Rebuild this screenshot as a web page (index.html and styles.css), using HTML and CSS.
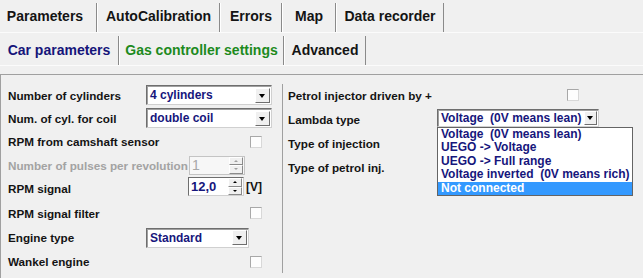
FILE: index.html
```html
<!DOCTYPE html>
<html lang="en">
<head>
    <meta charset="UTF-8">
    <title>Parameters</title>
    <link rel="stylesheet" href="styles.css">
</head>
<body>
    <div class="tabs">
        <div class="tab tab-first w-params">Parameters</div>
        <div class="tab w-auto">AutoCalibration</div>
        <div class="tab w-errors">Errors</div>
        <div class="tab w-map">Map</div>
        <div class="tab w-rec">Data recorder</div>
    </div>

    <div class="tabs subtabs">
        <div class="tab tab-first w-car car">Car parameters</div>
        <div class="tab w-gas gas">Gas controller settings</div>
        <div class="tab w-adv">Advanced</div>
    </div>

    <div class="panel">
        <div class="col col-left">
            <div class="row h23">
                <span class="label fixed">Number of cylinders</span>
                <div class="select w-wide"><span class="value">4 cylinders</span><span class="drop"></span></div>
            </div>
            <div class="row h23">
                <span class="label fixed">Num. of cyl. for coil</span>
                <div class="select w-wide"><span class="value">double coil</span><span class="drop"></span></div>
            </div>
            <div class="row h24">
                <span class="label">RPM from camshaft sensor</span>
                <span class="check"></span>
            </div>
            <div class="row h23">
                <span class="label disabled">Number of pulses per revolution</span>
                <div class="spin spin-disabled">
                    <span class="spin-value">1</span>
                    <span class="spin-btns"><span class="up"></span><span class="down"></span></span>
                </div>
            </div>
            <div class="row h25">
                <span class="label">RPM signal</span>
                <div class="spin spin-unit">
                    <span class="spin-value">12,0</span>
                    <span class="spin-btns"><span class="up"></span><span class="down"></span></span>
                </div>
                <span class="unit">[V]</span>
            </div>
            <div class="row h24">
                <span class="label">RPM signal filter</span>
                <span class="check"></span>
            </div>
            <div class="row h25">
                <span class="label fixed">Engine type</span>
                <div class="select w-engine"><span class="value">Standard</span><span class="drop"></span></div>
            </div>
            <div class="row h23">
                <span class="label">Wankel engine</span>
                <span class="check"></span>
            </div>
        </div>

        <div class="col col-right">
            <div class="row h23">
                <span class="label fixed-r">Petrol injector driven by +</span>
                <span class="check check-r"></span>
            </div>
            <div class="row h24">
                <span class="label fixed-r">Lambda type</span>
                <div class="select w-lambda">
                    <span class="value">Voltage  (0V means lean)</span><span class="drop"></span>
                    <ul class="list">
                        <li>Voltage  (0V means lean)</li>
                        <li>UEGO -&gt; Voltage</li>
                        <li>UEGO -&gt; Full range</li>
                        <li>Voltage inverted  (0V means rich)</li>
                        <li class="selected">Not connected</li>
                    </ul>
                </div>
            </div>
            <div class="row h24">
                <span class="label">Type of injection</span>
            </div>
            <div class="row h24">
                <span class="label">Type of petrol inj.</span>
            </div>
        </div>
    </div>
</body>
</html>
```

FILE: styles.css
```css
body {
    margin: 0;
    background-color: #f0f0f0;
    font-family: "Liberation Sans", Arial, sans-serif;
    font-weight: bold;
    color: #141414;
    overflow: hidden;
}

/* tab rows */
.tabs {
    display: flex;
    align-items: flex-end;
    height: 32px;
    border-bottom: 1px solid #fbfbfb;
}

.tab {
    box-sizing: border-box;
    height: 29px;
    line-height: 27px;
    font-size: 14px;
    text-align: center;
    white-space: nowrap;
    border-left: 1px solid #ffffff;
    border-right: 1px solid #8a8a8a;
}

.tab-first {
    border-left: none;
}

.w-params { width: 97px; padding-right: 6px; }
.w-auto { width: 123px; }
.w-errors { width: 62px; }
.w-map { width: 54px; }
.w-rec { width: 108px; }

.subtabs .tab {
    line-height: 28px;
}

.w-car { width: 119px; }
.w-gas { width: 165px; }
.w-adv { width: 82px; }

.car { color: #15157a; }
.gas { color: #1d8a1d; }

/* panel */
.panel {
    display: flex;
    margin-top: 8px;
    padding-top: 9px;
    border-top: 1px solid #a0a0a0;
    border-left: 1px solid #a0a0a0;
    height: 200px;
}

.col {
    display: flex;
    flex-direction: column;
}

.col-left {
    box-sizing: border-box;
    width: 282px;
    height: 189px;
    padding: 0 10px 0 7px;
    border-right: 1px solid #a0a0a0;
}

.col-right {
    padding-left: 5px;
    width: 330px;
}

.row {
    display: flex;
    align-items: center;
}

.h23 { height: 23px; }
.h24 { height: 24px; }
.h25 { height: 25px; }

.label {
    font-size: 11.7px;
    white-space: nowrap;
}

.fixed {
    width: 138px;
    flex: none;
}

.fixed-r {
    width: 149px;
    flex: none;
}

.disabled {
    color: #a3a3a3;
}

/* checkbox */
.check {
    box-sizing: border-box;
    width: 12px;
    height: 12px;
    margin-left: auto;
    margin-right: 10px;
    background: #fdfdfd;
    border: 1px solid #a8a8a8;
    border-right-color: #d8d8d8;
    border-bottom-color: #d8d8d8;
}

.check-r {
    margin-left: 130px;
    margin-right: 0;
    margin-top: -2px;
}

/* combo box */
.select {
    position: relative;
    box-sizing: border-box;
    display: flex;
    align-items: center;
    height: 20px;
    background: #ffffff;
    border: 1px solid #6e6e6e;
    border-right-color: #d0d0d0;
    border-bottom-color: #d0d0d0;
    box-shadow: inset 1px 1px 0 #a0a0a0;
}

.w-wide { width: 126px; }
.w-engine { width: 103px; }
.w-lambda { width: 162px; height: 18px; margin-top: -3px; }

.value {
    flex: 1;
    overflow: hidden;
    padding-left: 3px;
    font-size: 12px;
    color: #16167c;
    white-space: pre;
}

.drop {
    box-sizing: border-box;
    position: relative;
    width: 15px;
    height: 15px;
    margin-right: 1px;
    background: #f0f0f0;
    border: 1px solid #ffffff;
    border-right-color: #6e6e6e;
    border-bottom-color: #6e6e6e;
}

.w-lambda .drop {
    height: 14px;
    width: 13px;
}

.drop::after {
    content: "";
    position: absolute;
    left: 3px;
    top: 5px;
    border-left: 3.5px solid transparent;
    border-right: 3.5px solid transparent;
    border-top: 4px solid #000000;
}

.w-lambda .drop::after {
    left: 2px;
    top: 4px;
}

/* open drop-down list */
.list {
    position: absolute;
    left: -1px;
    top: 17px;
    width: 196px;
    margin: 0;
    padding: 0;
    list-style: none;
    background: #ffffff;
    border: 1px solid #646464;
    box-sizing: border-box;
}

.list li {
    height: 13.5px;
    line-height: 13.5px;
    padding-left: 3px;
    font-size: 12px;
    color: #16167c;
    white-space: pre;
}

.list li.selected {
    background: #3399ff;
    color: #ffffff;
}

/* spin edit */
.spin {
    box-sizing: border-box;
    display: flex;
    width: 56px;
    height: 19px;
    margin-left: auto;
    margin-right: 27px;
    background: #ffffff;
    border: 1px solid #6e6e6e;
    border-right-color: #d0d0d0;
    border-bottom-color: #d0d0d0;
}

.spin-unit {
    margin-right: 2px;
    margin-top: -4px;
}

.spin-disabled {
    background: #f7f7f7;
    border-color: #c4c4c4;
}

.spin-value {
    flex: 1;
    padding-left: 2px;
    font-size: 13px;
    line-height: 17px;
    color: #16167c;
}

.spin-disabled .spin-value {
    color: #a8a8a8;
    font-weight: normal;
    font-size: 14px;
}

.spin-btns {
    display: flex;
    flex-direction: column;
    width: 14px;
    margin-right: 1px;
}

.up, .down {
    position: relative;
    flex: 1;
    background: #f0f0f0;
    border: 1px solid #ffffff;
    border-right-color: #8a8a8a;
    border-bottom-color: #8a8a8a;
}

.up::after, .down::after {
    content: "";
    position: absolute;
    left: 4px;
    top: 2px;
    border-left: 2px solid transparent;
    border-right: 2px solid transparent;
}

.up::after {
    border-bottom: 2px solid #000000;
}

.down::after {
    border-top: 2px solid #000000;
}

.spin-disabled .up::after {
    border-bottom-color: #a0a0a0;
}

.spin-disabled .down::after {
    border-top-color: #a0a0a0;
}

.unit {
    font-size: 12px;
    margin-right: 10px;
    margin-top: -4px;
}
```
